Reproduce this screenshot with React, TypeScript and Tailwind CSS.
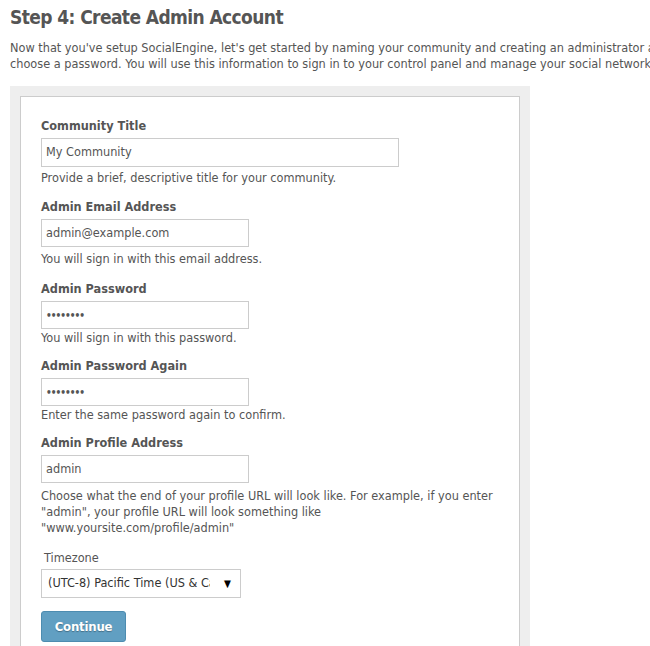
import React from 'react';

const font = "font-['DejaVu_Sans_Condensed','DejaVu_Sans',sans-serif]";

interface FieldProps {
  label: string;
  value: string;
  help: React.ReactNode;
  width: string;
  box: string; // input margin + height
  helpGap: string;
  password?: boolean;
  className?: string;
}

const Field: React.FC<FieldProps> = ({ label, value, help, width, box, helpGap, password, className }) => (
  <div className={className}>
    <label className="block text-[12.6px] leading-4 font-bold text-[#555]">{label}</label>
    <div className={`${box} ${width} border border-[#ccc] bg-white px-[4px] flex items-center text-[12.6px] text-[#555]`}>
      {password ? <span className="text-[10px] tracking-[-1px] font-bold">{value}</span> : value}
    </div>
    <p className={`${helpGap} text-[12.6px] leading-4 text-[#555] whitespace-nowrap`}>{help}</p>
  </div>
);

export default function App() {
  return (
    <div className={`${font} bg-white min-h-[646px] px-[10px] pt-[2px] overflow-hidden`}>
      <h1 className="text-[19px] leading-[30px] font-bold tracking-[-0.6px] text-[#555] whitespace-nowrap">Step 4: Create Admin Account</h1>
      <p className="mt-[8px] text-[12.6px] leading-4 text-[#555] whitespace-nowrap">
        Now that you've setup SocialEngine, let's get started by naming your community and creating an administrator account. Please
        <br />
        choose a password. You will use this information to sign in to your control panel and manage your social network.
      </p>

      <div className="mt-[14px] w-[520px] bg-[#eee] p-[10px] pb-0">
        <div className="border border-[#ccc] border-b-0 bg-white px-[20px] pt-[21px] pb-[20px]">
          <Field
            label="Community Title"
            value="My Community"
            width="w-[358px]"
            box="mt-[4px] h-[29px]"
            helpGap="mt-[3px]"
            help="Provide a brief, descriptive title for your community."
          />
          <Field
            className="mt-[13px]"
            label="Admin Email Address"
            value="admin@example.com"
            width="w-[208px]"
            box="mt-[4px] h-[28px]"
            helpGap="mt-[4px]"
            help="You will sign in with this email address."
          />
          <Field
            className="mt-[14px]"
            label="Admin Password"
            value="••••••••"
            password
            width="w-[208px]"
            box="mt-[4px] h-[28px]"
            helpGap="mt-[1px]"
            help="You will sign in with this password."
          />
          <Field
            className="mt-[12px]"
            label="Admin Password Again"
            value="••••••••"
            password
            width="w-[208px]"
            box="mt-[4px] h-[28px]"
            helpGap="mt-[1px]"
            help="Enter the same password again to confirm."
          />
          <Field
            className="mt-[12px]"
            label="Admin Profile Address"
            value="admin"
            width="w-[208px]"
            box="mt-[4px] h-[28px]"
            helpGap="mt-[5px]"
            help={
              <>
                Choose what the end of your profile URL will look like. For example, if you enter
                <br />
                "admin", your profile URL will look something like
                <br />
                "www.yoursite.com/profile/admin"
              </>
            }
          />

          <div className="mt-[14px]">
            <label className="block pl-[3px] text-[12.6px] leading-4 text-[#555]">Timezone</label>
            <div className="mt-[3px] h-[29px] w-[200px] border border-[#ccc] bg-white flex items-center pl-[6px] pr-[9px] text-[12.6px] text-[#333]">
              <span className="flex-1 overflow-hidden whitespace-nowrap">(UTC-8) Pacific Time (US &amp; Canada)</span>
              <span className="ml-[14px] text-[10px] text-black">▼</span>
            </div>
          </div>

          <button className="mt-[13px] h-[31px] w-[85px] rounded-[3px] border border-[#4d8cb0] bg-[#619fc2] text-white text-[13px] font-bold tracking-[-0.2px] [text-shadow:0_1px_1px_rgba(0,0,0,0.3)]">
            Continue
          </button>
        </div>
      </div>
    </div>
  );
}
